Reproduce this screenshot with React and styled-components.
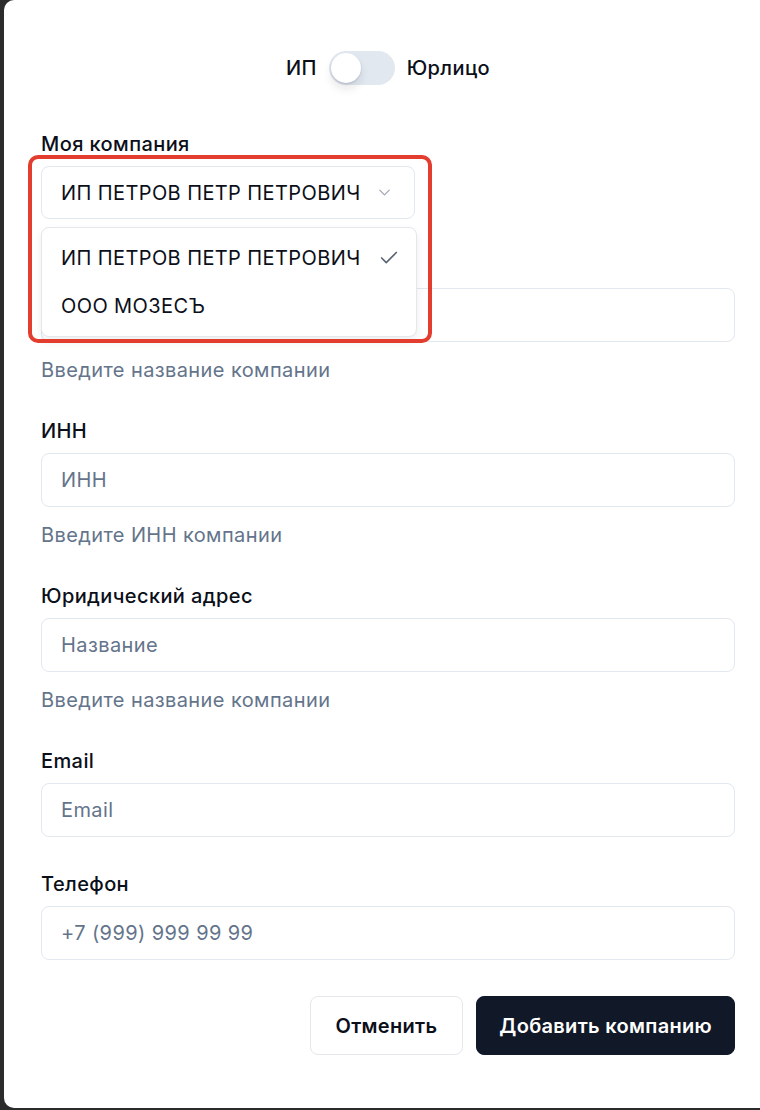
import React, { useState } from 'react';
import styled, { createGlobalStyle } from 'styled-components';

const GlobalStyle = createGlobalStyle`
  html, body {
    margin: 0;
    padding: 0;
    background: #2b2b2b;
    font-family: Inter, "Noto Sans", sans-serif;
    -webkit-font-smoothing: antialiased;
  }
  * { box-sizing: border-box; }
`;

const Modal = styled.div`
  margin-left: 4px;
  width: calc(100% - 4px);
  height: 1108px;
  background: #ffffff;
  border-radius: 10px 0 0 10px;
  padding: 51px 25px 0 37px;
  color: #0b0f19;
  letter-spacing: 0.4px;
`;

const ToggleRow = styled.div`
  display: flex;
  align-items: center;
  justify-content: center;
  gap: 12px;
  height: 34px;
  margin-bottom: 45px;
`;

const ToggleText = styled.span`
  font-size: 20px;
  font-weight: 500;
  line-height: 28px;
`;

const Track = styled.button`
  position: relative;
  width: 66px;
  height: 34px;
  border: none;
  border-radius: 17px;
  padding: 0;
  background: ${p => (p.$on ? '#0f172a' : '#e2e8f0')};
  cursor: pointer;
`;

const Knob = styled.span`
  position: absolute;
  top: 2px;
  left: ${p => (p.$on ? '34px' : '2px')};
  width: 30px;
  height: 30px;
  border-radius: 50%;
  background: #ffffff;
  box-shadow: 0 6px 10px rgba(15, 23, 42, 0.1), 0 1px 2px rgba(15, 23, 42, 0.15);
`;

const Form = styled.div`
  display: flex;
  flex-direction: column;
  gap: 33px;
`;

const Field = styled.div`
  display: flex;
  flex-direction: column;
  position: relative;
`;

const Label = styled.label`
  font-size: 20px;
  font-weight: 500;
  line-height: 28px;
  margin-bottom: 8px;
  color: #0b0f19;
`;

const Input = styled.input`
  width: 100%;
  height: 54px;
  border: 1px solid #e2e8f0;
  border-radius: 8px;
  padding: 0 19px;
  font-family: inherit;
  font-size: 20px;
  letter-spacing: 0.4px;
  color: #0b0f19;
  background: #fff;
  outline: none;

  &::placeholder {
    color: #64748b;
  }
`;

const Hint = styled.div`
  margin-top: 14px;
  font-size: 20px;
  line-height: 28px;
  color: #64748b;
`;

const SelectWrap = styled.div`
  position: relative;
  width: 374px;
`;

const Trigger = styled.div`
  height: 53px;
  border: 1px solid #e2e8f0;
  border-radius: 8px;
  padding: 0 20px 0 19px;
  display: flex;
  align-items: center;
  justify-content: space-between;
  font-size: 20px;
  background: #fff;
`;

const Menu = styled.div`
  position: absolute;
  z-index: 2;
  top: 61px;
  left: 0;
  width: 376px;
  padding: 6px 0;
  background: #fff;
  border: 1px solid #e5e7eb;
  border-radius: 8px;
  box-shadow: 0 4px 8px rgba(15, 23, 42, 0.08);
`;

const Option = styled.div`
  height: 48px;
  padding: 0 16px 0 19px;
  display: flex;
  align-items: center;
  justify-content: space-between;
  font-size: 20px;
  color: #0b0f19;
`;

const Highlight = styled.div`
  position: absolute;
  z-index: 3;
  top: -11px;
  left: -13px;
  width: 404px;
  height: 188px;
  border: 4px solid #e23d2f;
  border-radius: 10px;
  pointer-events: none;
`;

const Actions = styled.div`
  display: flex;
  justify-content: flex-end;
  gap: 13px;
  margin-top: 36px;
`;

const Button = styled.button`
  height: 59px;
  padding: 0 ${p => (p.$primary ? '22px' : '25px')};
  border-radius: 8px;
  font-family: inherit;
  font-size: 20px;
  font-weight: 600;
  letter-spacing: 0.3px;
  cursor: pointer;
  border: 1px solid ${p => (p.$primary ? '#111827' : '#e5e7eb')};
  background: ${p => (p.$primary ? '#111827' : '#ffffff')};
  color: ${p => (p.$primary ? '#ffffff' : '#0b0f19')};
`;

const Chevron = () => (
  <svg width="19" height="19" viewBox="0 0 24 24" fill="none" stroke="#a1a8b3" strokeWidth="1.6" strokeLinecap="round" strokeLinejoin="round">
    <path d="m6 9 6 6 6-6" />
  </svg>
);

const Check = () => (
  <svg width="22" height="22" viewBox="0 0 24 24" fill="none" stroke="#5b6473" strokeWidth="1.8" strokeLinecap="round" strokeLinejoin="round">
    <path d="M20 6 9 17l-5-5" />
  </svg>
);

const companies = ['ИП ПЕТРОВ ПЕТР ПЕТРОВИЧ', 'ООО МОЗЕСЪ'];

export default function App() {
  const [legal, setLegal] = useState(false);
  const [selected] = useState(companies[0]);

  return (
    <>
      <GlobalStyle />
      <Modal>
        <ToggleRow>
          <ToggleText>ИП</ToggleText>
          <Track $on={legal} onClick={() => setLegal(!legal)}>
            <Knob $on={legal} />
          </Track>
          <ToggleText>Юрлицо</ToggleText>
        </ToggleRow>

        <Form>
          <Field>
            <Label>Моя компания</Label>
            <SelectWrap>
              <Trigger>
                <span>{selected}</span>
                <Chevron />
              </Trigger>
              <Menu>
                {companies.map(c => (
                  <Option key={c}>
                    <span>{c}</span>
                    {c === selected && <Check />}
                  </Option>
                ))}
              </Menu>
              <Highlight />
            </SelectWrap>
          </Field>

          <Field>
            <Label>Название компании</Label>
            <Input placeholder="Название" />
            <Hint>Введите название компании</Hint>
          </Field>

          <Field>
            <Label>ИНН</Label>
            <Input placeholder="ИНН" />
            <Hint>Введите ИНН компании</Hint>
          </Field>

          <Field>
            <Label>Юридический адрес</Label>
            <Input placeholder="Название" />
            <Hint>Введите название компании</Hint>
          </Field>

          <Field>
            <Label>Email</Label>
            <Input placeholder="Email" />
          </Field>

          <Field>
            <Label>Телефон</Label>
            <Input placeholder="+7 (999) 999 99 99" />
          </Field>
        </Form>

        <Actions>
          <Button>Отменить</Button>
          <Button $primary>Добавить компанию</Button>
        </Actions>
      </Modal>
    </>
  );
}
